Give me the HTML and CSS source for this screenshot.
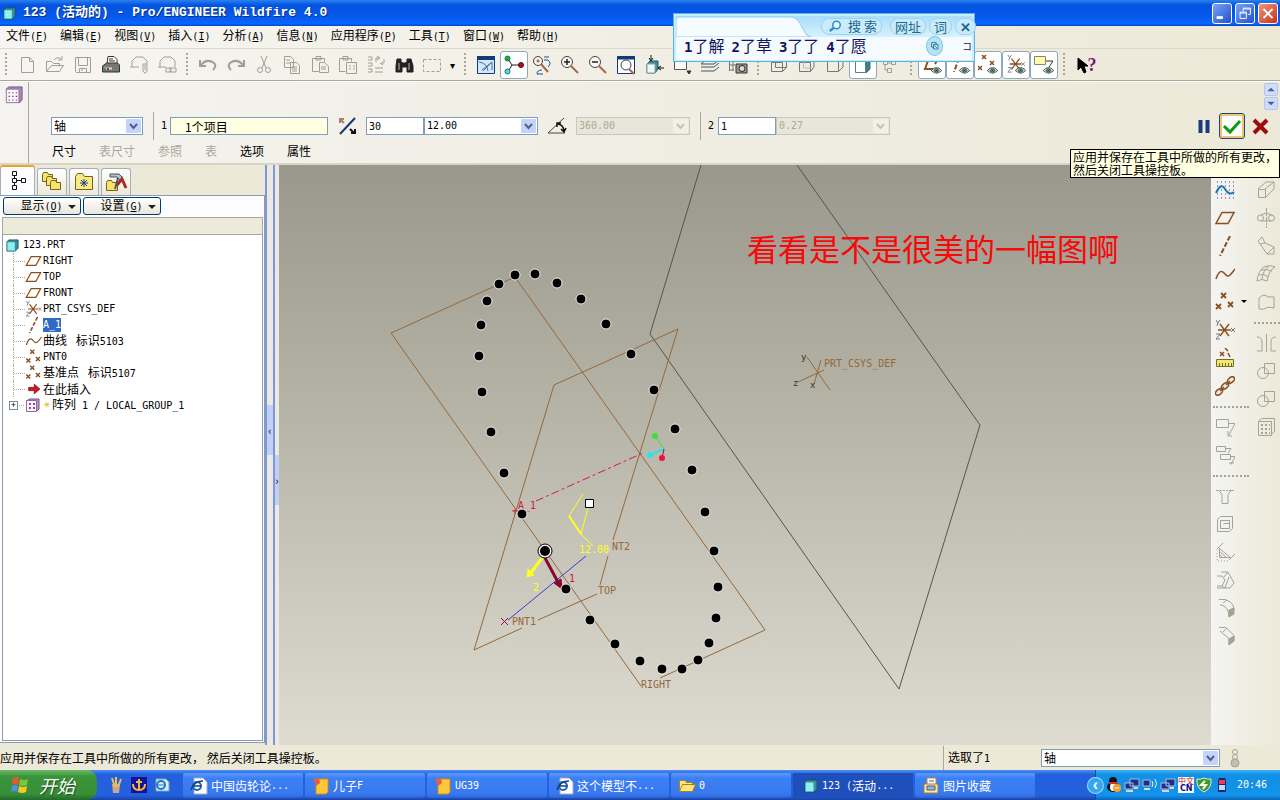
FILE: index.html
```
<!DOCTYPE html>
<html lang="zh-CN">
<head>
    <meta charset="utf-8">
    <title>123 (活动的) - Pro/ENGINEER Wildfire 4.0</title>
    <link rel="stylesheet" href="styles.css">
</head>
<body>
    <!-- 共用图标 -->
    <svg class="symbols">
        <symbol id="plane" viewBox="0 0 20 20"><path d="M7 4.500H19L13 15.500H1z" fill="none" stroke="#8b4f20" stroke-width="1.500"/></symbol>
        <symbol id="axis" viewBox="0 0 20 20"><path d="M15 0L5 20" fill="none" stroke="#8b4f20" stroke-width="2" stroke-dasharray="5 2"/></symbol>
        <symbol id="curve" viewBox="0 0 20 20"><path d="M1 15C4 6 7 6 10 10S15 12 20 5" fill="none" stroke="#8b4f20" stroke-width="1.500"/></symbol>
        <symbol id="points" viewBox="0 0 20 20"><path d="M6 1l5 5m0-5l-5 5M1 12l5 5m0-5l-5 5M13 10l5 5m0-5l-5 5" fill="none" stroke="#8b4f20" stroke-width="1.800"/></symbol>
        <symbol id="csys" viewBox="0 0 20 20"><path d="M3 10H16M5 4l9 12M14 4L5 16" fill="none" stroke="#8b4f20" stroke-width="1.400"/><path d="M1 0l2 3l2-3M3 3l-1 3M1 14h4l-4 5h4M16 8l4 4m0-4l-4 4" fill="none" stroke="#777"/></symbol>
        <symbol id="cube" viewBox="0 0 14 14"><path d="M1 3l2-2h10v9l-3 3H1z" fill="#3c8f96" stroke="#1d5560"/><path d="M1.500 3.500h8v9h-8z" fill="#8df0f0"/></symbol>
        <symbol id="eye" viewBox="0 0 12 8"><path d="M0 4Q6-3 12 4Q6 10 0 4" fill="#d8e8e0" stroke="#444"/><circle cx="6" cy="4" r="3" fill="#176b62"/><circle cx="6" cy="4" r="1" fill="#000"/></symbol>
        <symbol id="pattern" viewBox="0 0 20 20"><path d="M1 4l3-3h15v14l-3 4" fill="#a988b8" stroke="#71557f"/><path d="M1.500 3.500h14v15h-14z" fill="#f8f2fb" stroke="#8a6d98"/><path d="M4 7.500h10M4 11.500h10M4 15.500h10" stroke="#71406f" stroke-width="1.200" stroke-dasharray="1.500 2.500"/></symbol>
        <symbol id="pattern-small" viewBox="0 0 14 14"><path d="M1 3l2-2h10v10l-2 2" fill="#b79bc6" stroke="#71557f"/><path d="M.500 2.500h10v11h-10z" fill="#fbf4ff" stroke="#8a6d98"/><path d="M3 6h2M7 6h2M3 10h2M7 10h2" stroke="#a040a0" stroke-width="2"/></symbol>
        <symbol id="ie" viewBox="0 0 18 18"><path d="M4 1h9l4 4v12H4z" fill="#fff" stroke="#aab"/><circle cx="7" cy="9" r="4" fill="none" stroke="#1c64b8" stroke-width="2"/><path d="M3 9h8M1 13Q4 4 13 4" fill="none" stroke="#12407c" stroke-width="1.500"/></symbol>
        <symbol id="note" viewBox="0 0 18 18"><path d="M4 2h12v13l-2 2H4z" fill="#ffc83c" stroke="#d28a10"/><path d="M1 2l6-1l1 5l-4 3z" fill="#e0604c"/></symbol>
        <symbol id="monitors" viewBox="0 0 16 16"><path d="M6 2h9v7H6zM1 6h8v6H1z" fill="#1b2f8c" stroke="#b5bdd6"/><path d="M2 14h7M10 11h4" stroke="#d0d6e6" stroke-width="2"/></symbol>
    </svg>

    <header class="titlebar">
        <svg class="app-icon"><use href="#cube"/></svg>
        <h1>123 (活动的) - Pro/ENGINEER Wildfire 4.0</h1>
        <div class="window-buttons">
            <button title="最小化"><svg viewBox="0 0 20 20"><path d="M4 14.500h7" stroke-width="3"/></svg></button>
            <button title="还原"><svg viewBox="0 0 20 20"><path d="M8 8V4h8v7h-3M8 5h8M4.500 8.500h7v7h-7zM4 9.500h8"/></svg></button>
            <button class="close" title="关闭"><svg viewBox="0 0 20 20"><path d="M5 5l10 10M15 5L5 15" stroke-width="2"/></svg></button>
        </div>
    </header>

    <nav class="menubar">
        <a href="#">文件<span class="en">(<u>F</u>)</span></a>
        <a href="#">编辑<span class="en">(<u>E</u>)</span></a>
        <a href="#">视图<span class="en">(<u>V</u>)</span></a>
        <a href="#">插入<span class="en">(<u>I</u>)</span></a>
        <a href="#">分析<span class="en">(<u>A</u>)</span></a>
        <a href="#">信息<span class="en">(<u>N</u>)</span></a>
        <a href="#">应用程序<span class="en">(<u>P</u>)</span></a>
        <a href="#">工具<span class="en">(<u>T</u>)</span></a>
        <a href="#">窗口<span class="en">(<u>W</u>)</span></a>
        <a href="#">帮助<span class="en">(<u>H</u>)</span></a>
    </nav>

    <div class="toolbar">
        <i class="grip"></i>
        <button title="新建"><svg viewBox="0 0 20 20"><path d="M4.500 2.500h8l4 4v11h-12zM12.500 2.500v4h4"/></svg></button>
        <button title="打开"><svg viewBox="0 0 20 20"><path d="M1.500 16.500v-10h5l2 2h6v3M1.500 16.500l5-6h12l-4 6zM9 5q3-4 7-1M17 1v4h-4"/></svg></button>
        <button title="保存"><svg viewBox="0 0 20 20"><path d="M2.500 2.500h15v15h-14l-1-1zM5.500 2.500v8h9v-8M6.500 17.500v-4h7v4M8 15h2"/></svg></button>
        <button title="打印"><svg viewBox="0 0 20 20"><path d="M6 9L7 1.500h6l3 3V9" fill="#fff" stroke="#333"/><path d="M8 4h4M8 6h6" stroke="#333"/><path d="M1.500 11l4-3h11l2 2v7h-17z" fill="#777870" stroke="#333"/><path d="M3 13.500h8" stroke="#ddd" stroke-width="2"/><path d="M3 14h2" stroke="#1a3" stroke-width="2"/><path d="M6 14h2" stroke="#c21" stroke-width="2"/></svg></button>
        <button title="发送"><svg viewBox="0 0 20 20"><path d="M1 12h9M3 12V6l4-4h7l4 4v3M14 9h4v7q-2 4-4 0zM16 10v5"/></svg></button>
        <button title="链接"><svg viewBox="0 0 20 20"><path d="M1 12h8M3 12V6l4-4h7l4 4v6M9 13h5v4H9zM13 13h6v4h-6z"/></svg></button>
        <i class="grip"></i>
        <button title="撤消"><svg viewBox="0 0 20 20"><path d="M2 5v6h6M3 10q6-7 13-2q3 3-1 7" stroke-width="2"/></svg></button>
        <button title="重做"><svg viewBox="0 0 20 20"><path d="M18 5v6h-6M17 10q-6-7-13-2q-3 3 1 7" stroke-width="2"/></svg></button>
        <button title="剪切"><svg viewBox="0 0 20 20"><path d="M7 1l5 12M13 1L8 13"/><circle cx="6" cy="15" r="2.500"/><circle cx="14" cy="15" r="2.500"/></svg></button>
        <button title="复制"><svg viewBox="0 0 20 20"><path d="M2.500 1.500h6l3 3v8h-9zM8.500 7.500h6l3 3v8h-9zM4 5h4M4 8h4M10 12h5M10 14h5M10 16h5"/></svg></button>
        <button title="粘贴"><svg viewBox="0 0 20 20"><path d="M2.500 3.500h12v3M2.500 3.500v13h6M6 5V1.500h5V5zM9.500 7.500h5l4 4v6h-9zM11 12h5M11 14h5"/></svg></button>
        <button title="选择性粘贴"><svg viewBox="0 0 20 20"><path d="M1.500 3.500h12v3M1.500 3.500v13h6M5 5V1.500h5V5zM8.500 7.500h10v11h-10zM11 11h2M11 14h2M15 11h2M15 14h2"/></svg></button>
        <button title="再生"><svg viewBox="0 0 20 20"><path d="M2 2h4v3H2M2 8h4v3H2M2 14h4v3H2M9 13h8M9 17h8M10 7V3h3M11 1l3 2l-3 2M18 4v4h-3M17 10l-3-2"/></svg></button>
        <button title="查找"><svg viewBox="0 0 20 20"><path d="M3 4h4v3l2 1h2l2-1V4h4l2 7v6h-6v-5H8v5H2v-6z" fill="#222" stroke="#222"/><path d="M5 8v7M15 8v7" stroke="#bbb"/></svg></button>
        <button title="选取框"><svg viewBox="0 0 20 20"><path d="M1.500 4.500h17v12h-17z" stroke-dasharray="3 2"/></svg></button>
        <button class="drop" title="更多">▾</button>
        <i class="grip"></i>
        <button title="重画"><svg viewBox="0 0 20 20"><path d="M1.500 1.500h17v17h-17z" fill="#d5e6f8" stroke="#123a78"/><path d="M1 3h18" stroke="#123a78" stroke-width="4"/><path d="M3 7q8 1 9 9M6 15l10-8M7 16l9-9v8" stroke="#4870a0"/></svg></button>
        <button class="on" title="旋转中心"><svg viewBox="0 0 20 20"><path d="M4 4l4 6h9M8 10l-4 7" stroke="#222"/><circle cx="3.500" cy="3.500" r="2.500" fill="#18b038" stroke="#174"/><circle cx="3.500" cy="16.500" r="2.500" fill="#45e0e0" stroke="#177"/><circle cx="17" cy="10" r="2.500" fill="#a0142c" stroke="#601"/></svg></button>
        <button title="定向模式"><svg viewBox="0 0 20 20"><circle cx="6" cy="6" r="4.500" stroke="#444"/><path d="M9 9l7 8" stroke="#a56a45" stroke-width="2"/><path d="M12 2h5M12 5h4q4 3 0 7M5 19q0-4 5-4M11 19h-6" stroke="#234b9a"/><circle cx="6" cy="6" r="1" stroke="#a33"/></svg></button>
        <button title="放大"><svg viewBox="0 0 20 20"><circle cx="7" cy="7" r="5.500" stroke="#444" fill="#f8f8f4"/><path d="M4 7h6M7 4v6" stroke="#222" stroke-width="1.500"/><path d="M11 11l7 7" stroke="#a56a45" stroke-width="2"/></svg></button>
        <button title="缩小"><svg viewBox="0 0 20 20"><circle cx="7" cy="7" r="5.500" stroke="#444" fill="#f8f8f4"/><path d="M4 7h6" stroke="#222" stroke-width="1.500"/><path d="M11 11l7 7" stroke="#a56a45" stroke-width="2"/></svg></button>
        <button title="重新调整"><svg viewBox="0 0 20 20"><path d="M1.500 1.500h17v17h-17z" fill="#fff" stroke="#123a78"/><path d="M1 3h18" stroke="#123a78" stroke-width="3"/><circle cx="10" cy="10" r="5" stroke="#444"/><path d="M13 14l5 5" stroke="#a56a45" stroke-width="2"/></svg></button>
        <button title="重定向"><svg viewBox="0 0 20 20"><path d="M3 9l3-3h8v8l-3 4H3z" fill="#3c8f96" stroke="#257"/><path d="M3 9h8v9H3z" fill="#dffcfc"/><path d="M7 0v6M5 3l2 3l2-3M20 13h-5M17 11l-3 2l3 2" stroke="#111"/></svg></button>
        <button title="视图列表"><svg viewBox="0 0 20 20"><path d="M2.500 4.500h12v10h-12z" fill="#fafaf4" stroke="#555"/><path d="M15 16h4l-2 3z" fill="#333" stroke="#333"/></svg></button>
        <button title="图层"><svg viewBox="0 0 20 20"><path d="M6 5h13l-5 4H1zM1 12h13l5-4M1 16h13l5-4" stroke="#456"/></svg></button>
        <button title="视图管理器"><svg viewBox="0 0 20 20"><path d="M1.500 3v13M1 6h14M1 10h6M5 3v13M10 3v4M1 15h5" stroke="#777"/><path d="M8 9h11v9H8z" fill="#9a9a92" stroke="#333"/><circle cx="14" cy="13.500" r="3" fill="#ddd" stroke="#222"/></svg></button>
        <i class="grip"></i>
        <button title="线框"><svg viewBox="0 0 20 20"><path d="M2.500 7.500h11v9h-11zM6.500 3.500h11v9h-11zM2 7l4-4M14 16l4-4" stroke="#777"/></svg></button>
        <button title="隐藏线"><svg viewBox="0 0 20 20"><path d="M2.500 7.500h11v9h-11zM6 3h11v9l-3 4" stroke="#777"/><path d="M6.500 4v9h8" stroke="#bbb"/></svg></button>
        <button title="无隐藏线"><svg viewBox="0 0 20 20"><path d="M2.500 6.500h11v10h-11zM14 16l4-4V3H6" stroke="#777"/></svg></button>
        <button class="on" title="着色"><svg viewBox="0 0 20 20"><path d="M3 4h14v10l-4 4" fill="#358287" stroke="#567"/><path d="M2.500 5.500h10v12h-10z" fill="#fff" stroke="#678"/></svg></button>
        <button title="增强真实感"><svg viewBox="0 0 20 20"><path d="M2.500 5.500h4v4h-4zM10.500 5.500h4v4h-4zM6.500 13.500h4v4h-4zM6 8h4M4 10v5h3"/></svg></button>
        <i class="grip"></i>
        <button class="on" title="平面显示"><svg viewBox="0 0 20 20"><path d="M7 3L3 14h8M17 2l-4 7" stroke="#8b4f20" stroke-width="2"/><use href="#eye" x="9" y="12" width="11" height="7"/></svg></button>
        <button class="on" title="轴显示"><svg viewBox="0 0 20 20"><path d="M9 3L4 17" stroke="#8b4f20" stroke-width="2" stroke-dasharray="5 2"/><use href="#eye" x="9" y="12" width="11" height="7"/></svg></button>
        <button class="on" title="点显示"><svg viewBox="0 0 20 20"><path d="M4 0l4 4m0-4l-4 4M12 6l4 4m0-4l-4 4M0 11l4 4m0-4l-4 4" stroke="#8b4f20" stroke-width="1.500"/><use href="#eye" x="9" y="12" width="11" height="7"/></svg></button>
        <button class="on" title="坐标系显示"><svg viewBox="0 0 20 20"><use href="#csys" width="20" height="18"/><use href="#eye" x="9" y="12" width="11" height="7"/></svg></button>
        <button class="on" title="注释显示"><svg viewBox="0 0 20 20"><path d="M.500 1.500h11v8H.500z" fill="#fffcb0" stroke="#886"/><path d="M12 6h7l-4 6" stroke="#333"/><use href="#eye" x="9" y="12" width="11" height="7"/></svg></button>
        <i class="grip"></i>
        <button class="help" title="上下文帮助"><svg viewBox="0 0 20 20"><path d="M4 3v12l3-3l3 6l2-1l-2-6h4z" fill="#000" stroke="#000"/></svg><b>?</b></button>
    </div>

    <section class="dashboard">
        <div class="feature"><svg><use href="#pattern"/></svg></div>
        <div class="controls">
            <div class="fields">
                <select class="type" aria-label="类型"><option>轴</option></select>
                <i class="rule"></i>
                <label class="en" for="dir1">1</label>
                <input class="collector" id="dir1" value="1个项目">
                <button class="plain" title="反向"><svg viewBox="0 0 20 20"><path d="M3 18L18 2" stroke="#123a78" stroke-width="2"/><path d="M3 7V3h4M3 3l4 4" stroke="#a7836b" stroke-width="2"/><path d="M18 13v4h-4M17 17l-4-4" stroke="#111" stroke-width="2"/></svg></button>
                <input class="count en" value="30" aria-label="数量"><select class="amount en" aria-label="增量"><option>12.00</option></select>
                <button class="plain" title="角度"><svg viewBox="0 0 20 20"><path d="M1 17h17M1 17L17 2" stroke="#444"/><path d="M11 8q6 1 6 8M10 11V7h4M14 13l3 3l2-4" stroke="#111" stroke-width="1.500"/></svg></button>
                <select class="amount en" disabled aria-label="角度范围"><option>360.00</option></select>
                <i class="rule"></i>
                <label class="en two" for="dir2">2</label>
                <input class="count en" id="dir2" value="1"><select class="amount en" disabled aria-label="径向增量"><option>0.27</option></select>
            </div>
            <div class="slideups">
                <button>尺寸</button>
                <button disabled>表尺寸</button>
                <button disabled>参照</button>
                <button disabled>表</button>
                <button>选项</button>
                <button>属性</button>
            </div>
        </div>
        <div class="confirm">
            <button title="暂停"><svg viewBox="0 0 20 20"><path d="M6.500 4v13M13.500 4v13" stroke="#173a80" stroke-width="4"/></svg></button>
            <button class="ok" title="应用"><svg viewBox="0 0 20 20"><path d="M2 10l6 6L18 5" stroke="#0b9a12" stroke-width="3"/></svg></button>
            <button title="取消"><svg viewBox="0 0 20 20"><path d="M4 4l13 13M17 4L4 17" stroke="#a00c0c" stroke-width="4"/></svg></button>
        </div>
        <div class="spin">
            <button title="上"><svg viewBox="0 0 12 12"><path d="M2 8l4-4l4 4z"/></svg></button>
            <button title="下"><svg viewBox="0 0 12 12"><path d="M2 4l4 4l4-4z"/></svg></button>
        </div>
        <div class="tooltip">应用并保存在工具中所做的所有更改，<br>然后关闭工具操控板。</div>
    </section>

    <div class="ime">
        <div class="ime-top">
            <svg class="ime-notch" viewBox="0 0 150 20" preserveAspectRatio="none"><path d="M0 20V4Q0 1 4 1H120C135 1 132 20 144 20z" fill="#f6fbfe" stroke="#8ed2f0"/></svg>
            <button class="search"><svg viewBox="0 0 20 20"><circle cx="12" cy="8" r="5" fill="#e4f6ff" stroke="#2d8fd0" stroke-width="2"/><path d="M8 12l-5 4" stroke="#2d8fd0" stroke-width="3"/></svg>搜 索</button>
            <button>网址</button>
            <button>词</button>
            <button><b>✕</b></button>
        </div>
        <div class="ime-list">
            <span><b>1</b>了解</span><span><b>2</b>了草</span><span><b>3</b>了了</span><span><b>4</b>了愿</span>
            <button class="round" title="复制"><svg viewBox="0 0 20 20"><path d="M6 6h6v3M6 6v6h3M8.500 8.500h6v6h-6zM10 10l3 3" fill="none" stroke="#17688f"/></svg></button>
            <span class="mark">コ</span>
        </div>
    </div>

    <main>
        <aside class="navigator">
            <div class="tabs">
                <button class="current" title="模型树"><svg viewBox="0 0 24 24"><path d="M6.500 2.500h4v4h-4zM6.500 9.500h4v4h-4zM15.500 9.500h4v4h-4zM6.500 16.500h4v4h-4zM8.500 7v2M8.500 14v2M11 11.500h4" stroke="#111"/></svg></button>
                <button title="文件夹浏览器"><svg viewBox="0 0 24 24"><g fill="#f5e36b" stroke="#77621a"><path d="M2.500 4.500l1-2h4l1 2h4v7h-10z"/><path d="M6.500 8.500l1-2h4l1 2h4v7h-10z"/><path d="M10.500 12.500l1-2h4l1 2h4v7h-10z"/></g></svg></button>
                <button title="收藏夹"><svg viewBox="0 0 24 24"><path d="M3.500 6.500l2-3h5l2 3h8v13h-17z" fill="#f8ea80" stroke="#77621a"/><path d="M12 9v8M8 13h8M9 10l6 6M15 10l-6 6" stroke="#1c3a8c"/></svg></button>
                <button title="连接"><svg viewBox="0 0 24 24"><path d="M2.500 12.500l1-2h4l1 2h5v8h-11z" fill="#f5e36b" stroke="#77621a"/><path d="M6 4h9l4 4l-3 2l-3-3H6z" fill="#b4c0c8" stroke="#456"/><path d="M14 8l-3 11" stroke="#555" stroke-width="2"/><path d="M13 15l5-6l4 9" stroke="#a03028" stroke-width="3"/></svg></button>
            </div>
            <div class="tree-panel">
                <div class="tree-buttons">
                    <button>显示<span class="en">(<u>O</u>)</span><i></i></button>
                    <button>设置<span class="en">(<u>G</u>)</span><i></i></button>
                </div>
                <div class="tree-head"></div>
                <div class="tree">
                    <div class="root"><svg><use href="#cube"/></svg><span class="en">123.PRT</span></div>
                    <ul>
                        <li><svg><use href="#plane"/></svg><span class="en">RIGHT</span></li>
                        <li><svg><use href="#plane"/></svg><span class="en">TOP</span></li>
                        <li><svg><use href="#plane"/></svg><span class="en">FRONT</span></li>
                        <li><svg><use href="#csys"/></svg><span class="en">PRT_CSYS_DEF</span></li>
                        <li><svg><use href="#axis"/></svg><span class="en selected">A_1</span></li>
                        <li><svg><use href="#curve"/></svg><span>曲线 <span class="en"> </span>标识<span class="en">5103</span></span></li>
                        <li><svg><use href="#points"/></svg><span class="en">PNT0</span></li>
                        <li><svg><use href="#points"/></svg><span>基准点 <span class="en"> </span>标识<span class="en">5107</span></span></li>
                        <li><svg viewBox="0 0 20 20"><path d="M4 8h7V4l7 6l-7 6v-4H4z" fill="#d8141c" stroke="#701018"/></svg><span>在此插入</span></li>
                        <li class="branch"><button class="expand" title="展开">+</button><svg><use href="#pattern-small"/></svg><i class="star">✳</i><span>阵列<span class="en"> 1 / LOCAL_GROUP_1</span></span></li>
                    </ul>
                </div>
            </div>
        </aside>
        <div class="sash first"><button title="收起">‹</button></div>
        <div class="sash"><button title="展开">›</button></div>

        <div class="canvas">
            <svg viewBox="279 165 932 580" preserveAspectRatio="xMinYMin slice">
                <g class="sheet"><path d="M701 165L650 334L899 689L980 425L797 165"/></g>
                <g class="datum">
                    <path d="M641 686L391 333L515 277L765 630L660 678"/>
                    <path d="M522 628L474 650L554 385L678 329L613 540M608 556L600 585M538 620L597 594"/>
                    <path d="M807 357L830 390M798 382L824 370M814 384L821 360"/>
                    <text x="824" y="367">PRT_CSYS_DEF</text>
                    <text x="612" y="550">NT2</text>
                    <text x="598" y="594">TOP</text>
                    <text x="512" y="625">PNT1</text>
                    <text x="641" y="688">RIGHT</text>
                </g>
                <g class="csys-letters"><text x="801" y="360">y</text><text x="793" y="386">z</text><text x="810" y="388">x</text></g>
                <path d="M536 501L643 453" stroke="#d81840" stroke-dasharray="8 3 3 3"/>
                <path d="M512 511h6M515 509v5" stroke="#d81840"/>
                <text class="axis-name" x="518" y="509">A_1</text>
                <path d="M508 620L586 556" stroke="#3a3ad0"/>
                <path d="M501 618l7 7M508 618l-7 7" stroke="#a01038"/>
                <!-- 旋转中心 -->
                <path d="M664 449L655 436" stroke="#35e335"/><circle cx="655" cy="436" r="3" fill="#35e335"/>
                <path d="M664 449L650 455" stroke="#30e0e8" stroke-width="2"/><circle cx="650" cy="455" r="3" fill="#30e0e8"/>
                <path d="M664 449L662 458" stroke="#a01038"/><circle cx="662" cy="458" r="3" fill="#f0103c"/>
                <g class="handle">
                    <path d="M588 508L581 534L593 546M583 494L569 516"/>
                    <path d="M569 516L581 534" stroke-width="2"/>
                    <path d="M542 558L530 574" stroke-width="3"/>
                    <path d="M527 577l1-8l6 6z" fill="#ffff20"/>
                    <text x="579" y="553">12.00</text><text x="533" y="591">2</text>
                </g>
                <path d="M545 558L559 584" stroke="#880830" stroke-width="3"/>
                <path d="M562 589l-8-6l7-4z" fill="#880830" stroke="#880830"/>
                <text class="axis-name" x="569" y="582">1</text>
                <path d="M585.500 499.500h8v8h-8z" fill="#fff" stroke="#000"/>
                <g class="dots">
                    <circle cx="535" cy="274" r="5"/><circle cx="515" cy="275" r="5"/><circle cx="499" cy="284" r="5"/>
                    <circle cx="487" cy="301" r="5"/><circle cx="481" cy="325" r="5"/><circle cx="479" cy="356" r="5"/>
                    <circle cx="482" cy="392" r="5"/><circle cx="491" cy="432" r="5"/><circle cx="504" cy="473" r="5"/>
                    <circle cx="522" cy="514" r="5"/><circle cx="566" cy="589" r="5"/><circle cx="590" cy="620" r="5"/>
                    <circle cx="615" cy="644" r="5"/><circle cx="640" cy="661" r="5"/><circle cx="662" cy="669" r="5"/>
                    <circle cx="682" cy="669" r="5"/><circle cx="698" cy="660" r="5"/><circle cx="709" cy="643" r="5"/>
                    <circle cx="716" cy="618" r="5"/><circle cx="718" cy="587" r="5"/><circle cx="714" cy="551" r="5"/>
                    <circle cx="705" cy="512" r="5"/><circle cx="692" cy="470" r="5"/><circle cx="675" cy="429" r="5"/>
                    <circle cx="654" cy="390" r="5"/><circle cx="631" cy="354" r="5"/><circle cx="606" cy="324" r="5"/>
                    <circle cx="581" cy="299" r="5"/><circle cx="557" cy="283" r="5"/>
                </g>
                <circle cx="545" cy="551" r="7" fill="#eee" stroke="#000"/><circle cx="545" cy="551" r="5"/>
                <text class="caption" x="747" y="261">看看是不是很美的一幅图啊</text>
            </svg>
        </div>

        <div class="side-tools">
            <div class="column">
                <button title="草绘"><svg viewBox="0 0 20 20"><path d="M2 2h17M2 6h17M2 10h17M2 14h17M2 18h17" stroke="#2f3f80" stroke-dasharray="1 3"/><path d="M1 13Q6 2 10 9T19 12" stroke="#1c74c4" stroke-width="2"/></svg></button>
                <button title="平面"><svg><use href="#plane"/></svg></button>
                <button title="轴"><svg><use href="#axis"/></svg></button>
                <button title="曲线"><svg><use href="#curve"/></svg></button>
                <button class="more" title="点"><svg><use href="#points"/></svg></button>
                <button title="坐标系"><svg><use href="#csys"/></svg></button>
                <button title="分析"><svg viewBox="0 0 20 20"><path d="M5 4l4 4m0-4l-4 4M10 0l3 3M13 5l2 4" stroke="#8b4f20" stroke-width="1.500"/><path d="M1.500 11.500h17v7h-17z" fill="#f2e878" stroke="#77701a"/><path d="M4.500 15v3M7.500 15v3M10.500 15v3M13.500 15v3M16.500 15v3" stroke="#77701a"/></svg></button>
                <button title="参照"><svg viewBox="0 0 20 20"><g stroke="#8b4f20" stroke-width="1.500"><ellipse cx="4" cy="16" rx="4" ry="2.500" transform="rotate(-40 4 16)"/><ellipse cx="10" cy="10" rx="4" ry="2.500" transform="rotate(-40 10 10)"/><ellipse cx="16" cy="4" rx="4" ry="2.500" transform="rotate(-40 16 4)"/><path d="M5 15l4-4M11 9l4-4"/></g></svg></button>
                <i class="dots-rule"></i>
                <button title="注释"><svg viewBox="0 0 20 20"><path d="M1.500 2.500h12v8h-12zM14 6.500h6L14 18M13 14v5h4"/></svg></button>
                <button title="注释特征"><svg viewBox="0 0 20 20"><path d="M1.500 1.500h9v5h-9zM11 3.500h5l-3 5M5.500 9.500h10v5h-10zM16 11.500h4l-4 8M14 18h5"/></svg></button>
                <i class="dots-rule"></i>
                <button title="孔"><svg viewBox="0 0 20 20"><path d="M1 4.500h3l3 4v9h6v-9l3-4h3"/><path d="M5 4.500h11" stroke-dasharray="2 1"/></svg></button>
                <button title="壳"><svg viewBox="0 0 20 20"><path d="M2.500 5.500l3-3h12v12l-3 3h-12zM5.500 6.500h9v8h-9zM8.500 9.500h6v5"/></svg></button>
                <button title="筋"><svg viewBox="0 0 20 20"><path d="M2 7l6-6M14 18l6-6M4.500 6.500v9h11z"/><path d="M4 9l8 7M4 12l4 4"/><path d="M2 8v11h12" stroke-dasharray="1 2"/></svg></button>
                <button title="拔模"><svg viewBox="0 0 20 20"><path d="M2 6h5l3 4l-3 6H2M6 2h7l6 11l-4 5H2M13 2L9 7M7 16l3 2l4-11"/></svg></button>
                <button title="倒圆角"><svg viewBox="0 0 20 20"><path d="M4 1.500h6q9 3 9 10l-5 7q0-10-9-12M8 5l4-3"/><path d="M14 12l5-2v6l-5 3z" fill="#a3a398"/></svg></button>
                <button title="倒角"><svg viewBox="0 0 20 20"><path d="M4 1.500h7l8 8v5l-5 4v-6L5 5M8 6l4-4"/><path d="M14 13l5-3v5l-5 4z" fill="#a3a398"/></svg></button>
            </div>
            <div class="column">
                <button title="拉伸"><svg viewBox="0 0 20 20"><path d="M2.500 9.500h7v8h-7zM2 9l8-7h8v7l-8 8M9 9l9-7"/></svg></button>
                <button title="旋转"><svg viewBox="0 0 20 20"><path d="M10.500 0v20" stroke-dasharray="5 1 2 1"/><circle cx="4.500" cy="10" r="3"/><circle cx="15.500" cy="10" r="3"/><path d="M5 7l5-2l6 2M5 13h10"/></svg></button>
                <button title="扫描"><svg viewBox="0 0 20 20"><path d="M2 5l4-4l3 6l9 4v7h-7L4 8zM4 8l5-1M11 18l7-7"/></svg></button>
                <button title="边界混合"><svg viewBox="0 0 20 20"><path d="M8 3q6-3 11 0q-6 3-8 14q-5-3-10 0Q2 7 8 3M5 6q6-1 11 1M3 11q5-2 9 2M13 2Q7 6 6 15"/></svg></button>
                <button title="造型"><svg viewBox="0 0 20 20"><path d="M3 17V6q5-5 9-1h6v11q-6-2-8 0t-7 1z"/></svg></button>
                <i class="dots-rule"></i>
                <button title="镜像"><svg viewBox="0 0 20 20"><path d="M10.500 1v18M1 4q5 0 5 5v9H1M20 4q-5 0-5 5v9h5"/></svg></button>
                <button title="合并"><svg viewBox="0 0 20 20"><path d="M8.500 2.500h10v10h-10z"/><circle cx="7" cy="12" r="5.500"/></svg></button>
                <button title="修剪"><svg viewBox="0 0 20 20"><path d="M8.500 2.500h10v10h-10z"/><circle cx="7" cy="12" r="5.500"/></svg></button>
                <button title="阵列"><svg viewBox="0 0 20 20"><path d="M2.500 4.500l3-3h13v13l-3 3M2.500 4.500h13v14h-13z"/><path d="M5 8h9M5 12h9M5 16h9" stroke-width="2" stroke-dasharray="2 2"/></svg></button>
            </div>
        </div>
    </main>

    <footer class="status">
        <p>应用并保存在工具中所做的所有更改， 然后关闭工具操控板。</p>
        <label for="filter">选取了<span class="en">1</span></label>
        <select id="filter"><option>轴</option></select>
        <svg viewBox="0 0 12 20"><circle cx="6" cy="4" r="2.500"/><circle cx="6" cy="9" r="2.500"/><circle cx="6" cy="15" r="4" fill="#c2bfb0"/></svg>
    </footer>

    <div class="taskbar">
        <button class="start"><svg viewBox="0 0 20 20"><path d="M3 3q3-2 6 0l-1 7q-3-2-6 0z" fill="#e8562c"/><path d="M10 4q4 2 8 0l-1 6q-4 2-8 0z" fill="#7cc63c"/><path d="M2 11q3-2 6 0l-1 6q-3-2-6 0z" fill="#4b8ff0"/><path d="M9 11q4 2 8 0l-1 6q-4 2-8 0z" fill="#f8c828"/></svg>开始</button>
        <div class="quick">
            <a href="#" title="画图"><svg viewBox="0 0 18 18"><path d="M5 8h8l-1 9H6z" fill="#c7a890"/><path d="M5 2l3 9M9 1v10M14 3l-3 8" stroke="#eac05c" stroke-width="2"/></svg></a>
            <a href="#" title="UG"><svg viewBox="0 0 18 18"><path d="M1 1h16v16H1z" fill="#12129c"/><path d="M9 3v12M3 8q0 6 6 6t6-6M6 6h6" fill="none" stroke="#f5b838" stroke-width="2"/></svg></a>
            <a href="#" title="浏览器"><svg viewBox="0 0 18 18"><path d="M3 3h10l3 3v9H3z" fill="#d8efff" stroke="#6ab"/><circle cx="8" cy="9" r="4" fill="none" stroke="#2278b8" stroke-width="2"/><path d="M5 9h7" stroke="#2278b8"/></svg></a>
        </div>
        <div class="tasks">
            <button><svg><use href="#ie"/></svg>中国齿轮论<span class="en">...</span></button>
            <button><svg><use href="#note"/></svg>儿子<span class="en">F</span></button>
            <button><svg><use href="#note"/></svg><span class="en">UG39</span></button>
            <button><svg><use href="#ie"/></svg>这个模型不<span class="en">...</span></button>
            <button><svg viewBox="0 0 18 18"><path d="M1.500 14.500v-11h6l1 2h6v3M1.500 14.500l3-7h13l-3 7z" fill="#ffe680" stroke="#a8801c"/></svg><span class="en">0</span></button>
            <button class="active"><svg class="small"><use href="#cube"/></svg><span class="en">123 (</span>活动<span class="en">...</span></button>
            <button><svg viewBox="0 0 18 18"><path d="M5 1h9v7H5z" fill="#fff" stroke="#b88a3c"/><path d="M2 7h14v9H2z" fill="#f8e8b0" stroke="#a8801c"/><path d="M5 9h8v4H5zM7 4h5" fill="#8fb8d8" stroke="#557"/></svg>图片收藏</button>
        </div>
        <div class="tray">
            <button class="chevron" title="显示">‹</button>
            <svg viewBox="0 0 16 16"><circle cx="7" cy="4" r="4" fill="#111"/><ellipse cx="7" cy="10" rx="6" ry="5" fill="#111"/><ellipse cx="7" cy="10" rx="3" ry="4" fill="#fff"/><path d="M3 6h8" stroke="#e02820" stroke-width="2"/><circle cx="11" cy="11" r="4" fill="#ff9d28"/><path d="M9 11h4" stroke="#fff"/></svg>
            <svg><use href="#monitors"/></svg>
            <svg viewBox="0 0 16 16"><path d="M1 3h7v6H1z" fill="#1b2f8c" stroke="#b5bdd6"/><path d="M2 12h6" stroke="#ddd" stroke-width="2"/><path d="M10 4q2 3 0 6M13 2q3 5 0 9" fill="none" stroke="#e8f4ff"/></svg>
            <svg><use href="#monitors"/></svg>
            <div class="lang"><span>中文</span><b>CN</b></div>
            <svg viewBox="0 0 16 16"><path d="M8 1q4 2 7 1q1 9-7 13Q0 11 1 2q3 1 7-1" fill="#3c9a2c" stroke="#e8f0c0"/><path d="M9 4L5 8h5l-3 4" fill="none" stroke="#fff" stroke-width="2"/></svg>
            <svg viewBox="0 0 16 16"><path d="M5 1h6l1 2v12H4V3z" fill="#182878"/><path d="M5 3h6v4H5z" fill="#e84050"/><path d="M5 8h6v5H5z" fill="#c8d8ff"/></svg>
            <time class="en">20:46</time>
        </div>
    </div>
</body>
</html>
```

FILE: styles.css
```
* {
    box-sizing: border-box;
}
body {
    margin: 0;
    height: 100vh;
    display: flex;
    flex-direction: column;
    overflow: hidden;
    position: relative;
    background: #ece9d8;
    color: #000;
    font: 12px/16px "Noto Sans CJK SC", sans-serif;
}
button, input, select {
    font: inherit;
    color: inherit;
    margin: 0;
}
button {
    border: 0;
    padding: 0;
    background: none;
}
svg {
    flex: none;
    fill: none;
}
.symbols {
    position: absolute;
    width: 0;
    height: 0;
}
/* 英文和数字：半角宽度 */
.en {
    font-family: "DejaVu Sans Mono", "Noto Sans CJK SC", monospace;
    font-size: 10px;
    white-space: pre;
}

/* 标题栏 */
.titlebar {
    flex: none;
    height: 26px;
    display: flex;
    align-items: center;
    padding: 0 2px 0 3px;
    background: linear-gradient(#2a80f0, #0453e0 20%, #0458ea 60%, #0866ff 90%, #0348c8);
    color: #fff;
}
.app-icon {
    width: 13px;
    height: 13px;
    margin-right: 7px;
}
.titlebar h1 {
    flex: 1;
    margin: 0;
    font: bold 13px/20px "Liberation Mono", "Noto Sans CJK SC", monospace;
    text-shadow: 1px 1px #0a2c80;
}
.window-buttons {
    display: flex;
    gap: 3px;
}
.window-buttons button {
    width: 20px;
    height: 21px;
    border: 1px solid #fff;
    border-radius: 3px;
    background: linear-gradient(135deg, #7ba4f4, #1f50d0);
}
.window-buttons .close {
    background: linear-gradient(135deg, #f0967c, #c8321a);
}
.window-buttons svg {
    display: block;
    width: 18px;
    height: 19px;
    stroke: #fff;
}

/* 菜单 */
.menubar {
    flex: none;
    height: 23px;
    display: flex;
    gap: 12px;
    align-items: center;
    padding: 0 6px 2px;
    border-bottom: 1px solid #dcd9ca;
    background: linear-gradient(90deg, #f6f5f1, #ece9d8);
}
.menubar a {
    color: #000;
    text-decoration: none;
    white-space: nowrap;
}

/* 工具栏 */
.toolbar {
    flex: none;
    height: 32px;
    display: flex;
    align-items: center;
    border-bottom: 1px solid #aca899;
    background: linear-gradient(90deg, #f6f5f1, #ece9d8);
}
.toolbar button {
    width: 28px;
    height: 28px;
    display: flex;
    align-items: center;
    justify-content: center;
    border: 1px solid transparent;
    border-radius: 3px;
}
.toolbar svg {
    width: 20px;
    height: 20px;
    stroke: #a09f94;
}
.toolbar .on {
    background: #fff;
    border-color: #8fa9bb;
}
.toolbar .drop {
    width: 13px;
    font-size: 10px;
}
.toolbar .help b {
    font: bold 18px/20px "Liberation Serif", serif;
    color: #7c1678;
    margin-left: -6px;
}
.grip {
    flex: none;
    width: 13px;
    height: 24px;
    background: linear-gradient(#aaa797 50%, transparent 50%) 5px 0 / 2px 4px repeat-y;
}

/* 操控板 */
.dashboard {
    flex: none;
    height: 84px;
    display: flex;
    position: relative;
    border-top: 1px solid #fff;
    border-bottom: 2px solid #d8d5c4;
    background: linear-gradient(90deg, #f4f3ef, #ece9d8);
}
.feature {
    width: 29px;
    padding: 4px;
    border-right: 1px solid #aca899;
}
.feature svg {
    width: 20px;
    height: 18px;
}
.controls {
    flex: 1;
    padding: 30px 0 0 22px;
}
.fields {
    height: 28px;
    display: flex;
    align-items: center;
}
.fields input, select {
    height: 18px;
    padding: 0 2px;
    border: 1px solid #7f9db9;
    border-radius: 0;
    background-color: #fff;
}
select {
    appearance: none;
    background-image: url("data:image/svg+xml,%3Csvg xmlns='http://www.w3.org/2000/svg' width='15' height='14'%3E%3Crect width='15' height='14' rx='1' fill='%23c3d3fb'/%3E%3Cpath d='M4 5l3.500 4L11 5' fill='none' stroke='%234d6185' stroke-width='2'/%3E%3C/svg%3E");
    background-repeat: no-repeat;
    background-position: right 1px center;
}
select:disabled {
    opacity: 1;
    color: #aca899;
    border-color: #c9c7ba;
    background-color: #e8e6da;
    background-image: url("data:image/svg+xml,%3Csvg xmlns='http://www.w3.org/2000/svg' width='15' height='14'%3E%3Crect width='15' height='14' rx='1' fill='%23f2f0e6'/%3E%3Cpath d='M4 5l3.500 4L11 5' fill='none' stroke='%23c5c2b4' stroke-width='2'/%3E%3C/svg%3E");
}
.fields .type {
    width: 92px;
}
.rule {
    width: 1px;
    height: 28px;
    margin: 0 7px 0 10px;
    background: #aca899;
}
.fields label {
    width: 9px;
}
.fields .two {
    width: 10px;
}
.fields .collector {
    width: 158px;
    padding-left: 14px;
    background: #ffffe1;
}
.fields .count {
    width: 58px;
}
.fields .amount {
    width: 114px;
}
.plain {
    width: 38px;
    height: 20px;
}
.plain svg {
    width: 20px;
    height: 20px;
}
.slideups {
    display: flex;
    gap: 23px;
    padding: 3px 1px;
}
.slideups button:disabled {
    color: #aca899;
}
.confirm {
    display: flex;
    gap: 2px;
    padding-top: 31px;
}
.confirm button {
    width: 26px;
    height: 26px;
    border-radius: 3px;
}
.confirm .ok {
    border: 1px solid #1c4a78;
    box-shadow: inset 0 0 0 2px #f3c46c;
    background: #fff;
}
.confirm svg {
    display: block;
    margin: auto;
    width: 20px;
    height: 20px;
}
.spin {
    width: 16px;
    margin: 1px 0 0 -9px;
}
.spin button {
    display: block;
    width: 14px;
    height: 13px;
    margin-bottom: 1px;
    border: 1px solid #b4c6f0;
    border-radius: 2px;
    background: #d0dcfb;
}
.spin svg {
    display: block;
    width: 12px;
    height: 11px;
    fill: #4d6185;
}
.tooltip {
    position: absolute;
    z-index: 2;
    right: 0;
    top: 67px;
    padding: 0 2px 1px;
    border: 1px solid #000;
    background: #ffffe1;
    line-height: 13px;
    white-space: nowrap;
}

/* 输入法浮动条 */
.ime {
    position: absolute;
    z-index: 3;
    left: 673px;
    top: 13px;
    width: 302px;
    height: 49px;
    padding: 2px;
    border: 1px solid #59b4e4;
    background: #c9ecfb;
    color: #14145c;
}
.ime-top {
    height: 21px;
    display: flex;
    gap: 3px;
    align-items: center;
    background: linear-gradient(#a8defa, #d8f1fd);
}
.ime-notch {
    width: 142px;
    height: 21px;
}
.ime-top button {
    height: 17px;
    padding: 0 4px;
    border: 1px solid #9ad4f0;
    border-radius: 8px;
    background: #cbebfb;
    color: #17688f;
    font-size: 13px;
    line-height: 14px;
    white-space: nowrap;
}
.ime-top .search {
    width: 68px;
    display: flex;
    gap: 4px;
    margin-right: 5px;
}
.ime-top .search svg {
    width: 18px;
    height: 15px;
}
.ime-list {
    height: 23px;
    display: flex;
    gap: 7px;
    align-items: center;
    padding: 0 0 5px 8px;
    background: #f4fafd;
    font-size: 16px;
    line-height: 18px;
    white-space: nowrap;
}
.ime-list b {
    font: bold 14px/18px "DejaVu Sans Mono", monospace;
}
.round {
    width: 20px;
    height: 20px;
    margin: 0 12px 0 52px;
    border: 1px solid #7cc4e6;
    border-radius: 50%;
    background: #b8e2f6;
}
.round svg {
    display: block;
}
.ime-list .mark {
    font-size: 10px;
}

/* 模型树 */
main {
    flex: 1;
    min-height: 0;
    display: flex;
}
.navigator {
    width: 265px;
    display: flex;
    flex-direction: column;
    padding-bottom: 2px;
}
.tabs {
    display: flex;
    align-items: flex-end;
    gap: 2px;
    height: 30px;
}
.tabs button {
    width: 30px;
    height: 27px;
    border: 1px solid #a4afb8;
    border-bottom: 0;
    border-radius: 3px 3px 0 0;
    background: linear-gradient(#fff, #ece9d8);
}
.tabs .current {
    width: 35px;
    height: 30px;
    border-top: 2px solid #f0a030;
    background: #fcfcfe;
}
.tabs svg {
    display: block;
    margin: auto;
    width: 24px;
    height: 24px;
}
.tree-panel {
    flex: 1;
    display: flex;
    flex-direction: column;
    padding: 1px 1px 1px 2px;
    border: solid #8b9cab;
    border-width: 1px 1px 1px 0;
    background: #fcfcfe;
}
.tree-buttons {
    display: flex;
    gap: 2px;
    height: 20px;
    padding-left: 1px;
}
.tree-buttons button {
    width: 78px;
    height: 18px;
    padding-left: 12px;
    border: 1px solid #003c74;
    border-radius: 3px;
    background: linear-gradient(#fff, #e8e6dc);
    line-height: 14px;
}
.tree-buttons i {
    display: inline-block;
    margin-left: 5px;
    border: solid transparent;
    border-width: 4px 4px 0;
    border-top-color: #222;
    vertical-align: middle;
}
.tree-head {
    height: 18px;
    border: 1px solid #aca899;
    background: #ebeadb;
}
.tree {
    flex: 1;
    padding-top: 2px;
    border: 1px solid #8b9cab;
    border-top: 0;
    background: #fff;
}
.tree ul {
    margin: 0 0 0 10px;
    padding: 0;
    list-style: none;
}
.root, .tree li {
    height: 16px;
    display: flex;
    align-items: center;
    white-space: pre;
}
.root svg {
    width: 13px;
    height: 13px;
    margin: 0 4px 0 3px;
}
.tree li {
    border-left: 1px dotted #aaa;
}
.tree li::before {
    content: "";
    width: 11px;
    border-top: 1px dotted #aaa;
}
.tree li svg {
    width: 17px;
    height: 16px;
    margin-right: 1px;
}
.tree .selected {
    background: #316ac5;
    color: #fff;
    line-height: 14px;
}
.tree .branch {
    border-left: 0;
}
.tree .branch svg {
    width: 14px;
    height: 14px;
    margin: 0 3px 0 2px;
}
.expand {
    width: 9px;
    height: 9px;
    margin-left: -15px;
    margin-right: 6px;
    border: 1px solid #7c8c9c;
    background: #fff;
    font: 9px/7px "Liberation Sans", sans-serif;
}
.star {
    width: 9px;
    color: #c8c000;
    font: bold 9px/16px "DejaVu Sans", sans-serif;
}
.sash {
    width: 6px;
    display: flex;
    padding-top: 290px;
    border-left: 2px solid #7c98d8;
    background: #ece9e4;
}
.sash.first {
    width: 8px;
    padding-top: 240px;
}
.sash button {
    width: 100%;
    height: 50px;
    background: #c0cff4;
    font-size: 11px;
}

/* 图形区 */
.canvas {
    flex: 1;
    min-width: 0;
    background: linear-gradient(#9a978c, #b4b2a5 40%, #dedcd1);
}
.canvas svg {
    display: block;
    width: 100%;
    height: 100%;
}
.canvas text {
    font: 10px "DejaVu Sans Mono", monospace;
}
.sheet {
    stroke: #55554c;
}
.datum {
    stroke: #94683a;
}
.datum text {
    stroke: none;
    fill: #94683a;
}
.canvas .csys-letters text {
    font-size: 9px;
    fill: #333;
}
.axis-name {
    fill: #d81840;
}
.handle {
    stroke: #ffff20;
}
.handle text {
    stroke: none;
    fill: #ffff20;
}
.dots circle {
    fill: #000;
    stroke: #eee;
}
.canvas circle:not([fill]) {
    fill: #000;
}
.canvas .caption {
    font: 31px "Noto Sans CJK SC", sans-serif;
    fill: #f80808;
}

/* 右侧特征工具 */
.side-tools {
    width: 69px;
    display: flex;
    gap: 13px;
    padding-top: 11px;
    background: linear-gradient(90deg, #f4f4f2, #ece9d8);
}
.column {
    width: 28px;
    display: flex;
    flex-direction: column;
}
.column button {
    height: 28px;
    display: flex;
    align-items: center;
    justify-content: center;
    position: relative;
}
.column svg {
    width: 20px;
    height: 20px;
    stroke: #a3a398;
}
.column .more::after {
    content: "";
    position: absolute;
    right: -8px;
    top: 12px;
    border: solid transparent;
    border-width: 3px 3px 0;
    border-top-color: #000;
}
.dots-rule {
    width: 36px;
    margin: 6px 0 5px 2px;
    border-top: 2px dotted #a3a398;
}
.column:last-child .dots-rule {
    width: 26px;
}

/* 状态栏 */
.status {
    flex: none;
    height: 25px;
    display: flex;
    align-items: center;
    background: #ece9d8;
}
.status p {
    flex: 1;
    margin: 0;
}
.status label {
    width: 98px;
    padding-left: 4px;
    border-left: 1px solid #aca899;
    line-height: 22px;
}
.status select {
    width: 179px;
}
.status svg {
    width: 12px;
    height: 20px;
    margin: 0 39px 0 9px;
    stroke: #a3a398;
}

/* 任务栏 */
.taskbar {
    flex: none;
    height: 30px;
    display: flex;
    background: linear-gradient(#4a90f5, #2460de 15%, #2560dc 85%, #1a42a4);
    color: #fff;
}
.start {
    width: 97px;
    display: flex;
    gap: 9px;
    align-items: center;
    padding-left: 10px;
    border-radius: 0 10px 10px 0;
    background: linear-gradient(#6db96a, #3a963a 20%, #378f37 80%, #22692a);
    font-size: 18px;
    font-style: italic;
    text-shadow: 1px 1px 1px #1c4a1c;
    white-space: nowrap;
}
.start svg {
    width: 20px;
    height: 20px;
}
.quick {
    width: 86px;
    display: flex;
    gap: 5px;
    align-items: center;
    padding-left: 10px;
}
.quick a, .quick svg {
    display: block;
    width: 18px;
    height: 18px;
}
.tasks {
    flex: 1;
    min-width: 0;
    display: flex;
    gap: 2px;
    padding: 3px 0 2px;
}
.tasks button {
    flex: 0 1 120px;
    min-width: 0;
    display: flex;
    align-items: center;
    padding-left: 7px;
    border-radius: 2px;
    background: linear-gradient(#5c9bff, #3c80f4 20%, #3878ee 85%, #2c62d0);
    overflow: hidden;
    white-space: pre;
}
.tasks .active {
    padding-left: 11px;
    background: #1e4fba;
}
.tasks svg {
    width: 18px;
    height: 18px;
    margin-right: 3px;
}
.tasks .small {
    width: 14px;
    height: 14px;
    margin-right: 4px;
}
.tray {
    width: 185px;
    display: flex;
    gap: 2px;
    align-items: center;
    border-left: 1px solid #0a4fae;
    background: linear-gradient(#3ab4f4, #1290e6 15%, #1292e8 85%, #0c62b4);
}
.tray svg {
    width: 16px;
    height: 16px;
}
.chevron {
    flex: none;
    width: 17px;
    height: 17px;
    margin-left: -9px;
    border-radius: 50%;
    background: #37a6f0;
    box-shadow: inset 0 0 0 1px #9cd4fa;
    font: bold 16px/14px "Liberation Sans", sans-serif;
}
.lang {
    width: 16px;
    background: #fff;
    color: #c01820;
    font-size: 8px;
    line-height: 8px;
}
.lang b {
    display: block;
    padding-left: 2px;
    color: #10107c;
    font: bold 8px/8px "DejaVu Sans", sans-serif;
}
.tray time {
    margin-left: 5px;
}
```
